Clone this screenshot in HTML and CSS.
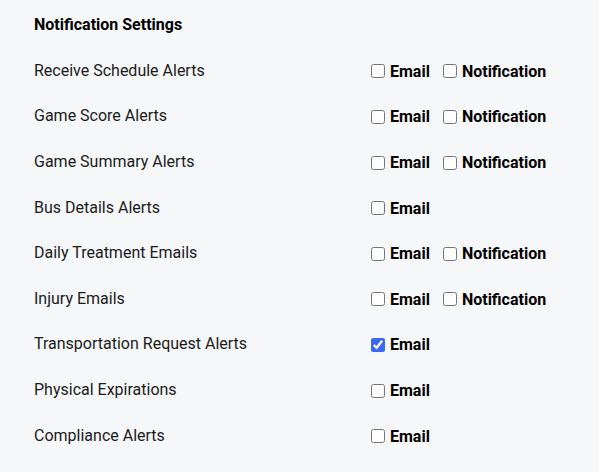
FILE: index.html
```html
<!DOCTYPE html>
<html>
<head>
	<meta charset="utf-8">
	<title>Notification Settings</title>
	<link rel="stylesheet" href="styles.css">
</head>
<body>
	<div class="settings">
		<div class="settings-title">Notification Settings</div>

		<div class="settings-row">
			<div class="settings-label">Receive Schedule Alerts</div>
			<div class="settings-options">
				<label class="opt"><input type="checkbox">Email</label>
				<label class="opt"><input type="checkbox">Notification</label>
			</div>
		</div>
		<div class="settings-row">
			<div class="settings-label">Game Score Alerts</div>
			<div class="settings-options">
				<label class="opt"><input type="checkbox">Email</label>
				<label class="opt"><input type="checkbox">Notification</label>
			</div>
		</div>
		<div class="settings-row">
			<div class="settings-label">Game Summary Alerts</div>
			<div class="settings-options">
				<label class="opt"><input type="checkbox">Email</label>
				<label class="opt"><input type="checkbox">Notification</label>
			</div>
		</div>
		<div class="settings-row">
			<div class="settings-label">Bus Details Alerts</div>
			<div class="settings-options">
				<label class="opt"><input type="checkbox">Email</label>
			</div>
		</div>
		<div class="settings-row">
			<div class="settings-label">Daily Treatment Emails</div>
			<div class="settings-options">
				<label class="opt"><input type="checkbox">Email</label>
				<label class="opt"><input type="checkbox">Notification</label>
			</div>
		</div>
		<div class="settings-row">
			<div class="settings-label">Injury Emails</div>
			<div class="settings-options">
				<label class="opt"><input type="checkbox">Email</label>
				<label class="opt"><input type="checkbox">Notification</label>
			</div>
		</div>
		<div class="settings-row">
			<div class="settings-label">Transportation Request Alerts</div>
			<div class="settings-options">
				<label class="opt"><input type="checkbox" checked>Email</label>
			</div>
		</div>
		<div class="settings-row">
			<div class="settings-label">Physical Expirations</div>
			<div class="settings-options">
				<label class="opt"><input type="checkbox">Email</label>
			</div>
		</div>
		<div class="settings-row">
			<div class="settings-label">Compliance Alerts</div>
			<div class="settings-options">
				<label class="opt"><input type="checkbox">Email</label>
			</div>
		</div>
	</div>
</body>
</html>
```

FILE: styles.css
```css
html, body {
	margin: 0;
	background: #f6f7f9;
}
body {
	font-family: Roboto, "Liberation Sans", sans-serif;
	color: #111;
}
.settings {
	padding: 2px 0 0 34px;
}
.settings-title {
	height: 45.6px;
	display: flex;
	align-items: center;
	font-size: 16px;
	font-weight: 700;
	color: #000;
}
.settings-row {
	height: 45.6px;
	display: flex;
	align-items: center;
}
.settings-label {
	width: 337px;
	font-size: 16px;
	color: #1b1b1b;
}
.settings-options {
	display: flex;
	align-items: center;
	gap: 13px;
	margin-top: 2px;
}
.opt {
	display: flex;
	align-items: center;
	font-size: 16px;
	font-weight: 700;
	color: #000;
}
.opt input {
	width: 14px;
	height: 14px;
	margin: 0 5px 0 0;
	accent-color: #3b68f2;
}
```
